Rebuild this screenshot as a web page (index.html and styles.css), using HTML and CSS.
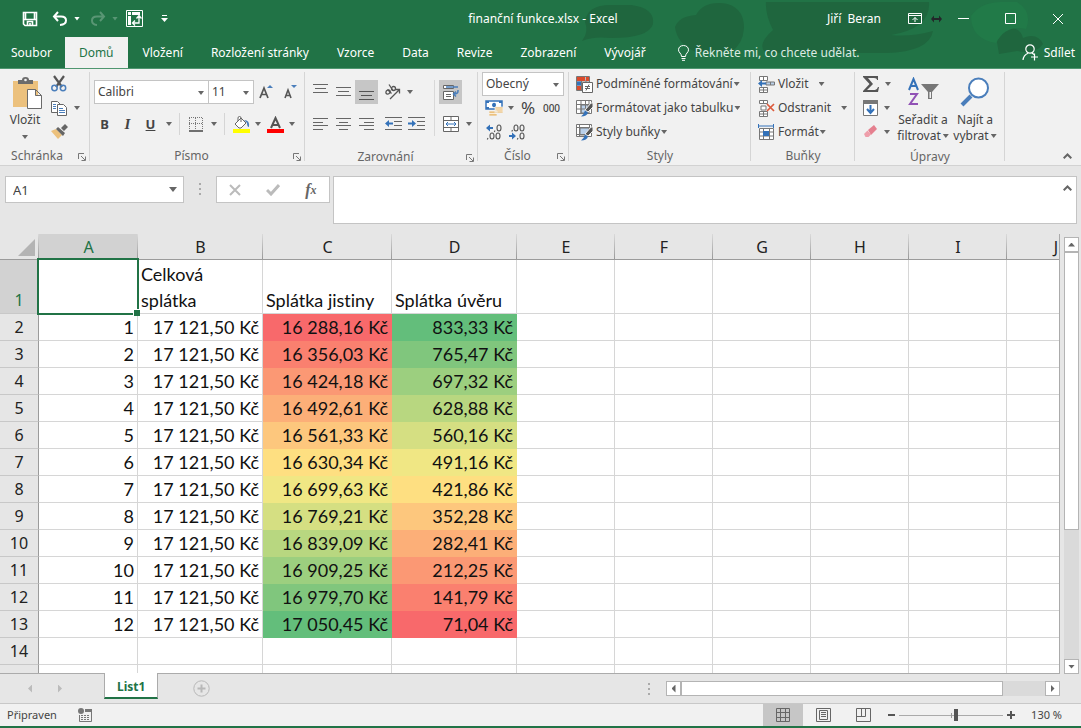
FILE: index.html
```html
<!DOCTYPE html>
<html lang="cs">
<head>
<meta charset="utf-8">
<title>finanční funkce.xlsx - Excel</title>
<link rel="stylesheet" href="styles.css">
</head>
<body>
<div class="app">
<header class="top">
  <svg class="decor" width="530" height="60" viewBox="0 0 530 60" aria-hidden="true">
    <g fill="#1f663e"><path d="M34 22Q36 4 62 5H80Q104 8 102 24Q98 38 60 38Q42 36 31 41Q38 32 34 22Z"/><path d="M124 27Q128 16 145 15Q152 2 170 3Q193 5 193 28Q192 44 180 52H145Q126 44 124 27Z"/><path d="M215 2H378Q380 28 340 35Q360 37 382 31Q378 52 335 53H215Q205 45 222 30Q214 14 215 2Z"/><path d="M446 42Q448 28 462 28Q470 30 472 38Q486 32 492 44Q484 55 466 51L448 54Z"/></g>
    <path fill="#217a48" d="M420 16Q430 2 450 2H466Q482 12 475 29Q455 24 445 43Q420 39 420 16Z"/>
  </svg>
  <div class="titlebar">
    <div class="quick">
      <button aria-label="Uložit"><svg width="16" height="16" viewBox="0 0 16 16" fill="none" stroke="#fff" stroke-width="1.600"><path d="M1.500 1.500h13v13H3l-1.500-1.500zM1.500 8.500h13M3.500 2v6M12.500 2v6"/><path d="M5.500 14v-3.500h5v3.500M8 12v2"/></svg></button>
      <button aria-label="Zpět"><svg width="16" height="16" viewBox="0 0 16 16" fill="none" stroke="#fff" stroke-width="2"><path d="M6 1 2 5.500 6 10M2 5.500h7Q14 5.500 14 9.500T8 14"/></svg></button>
      <span class="caret light"></span>
      <button aria-label="Znovu" class="dim redo"><svg width="16" height="16" viewBox="0 0 16 16" fill="none" stroke="#fff" stroke-width="2"><path d="M10 1l4 4.500-4 4.500M14 5.500H7Q2 5.500 2 9.500T7 14"/></svg></button>
      <span class="caret light dim"></span>
      <button aria-label="Kontingenční tabulka" class="pivot"><svg width="17" height="17" viewBox="0 0 17 17" fill="none" stroke="#fff"><path d="M.5.500h16v16H.5z"/><path fill="#fff" stroke="none" d="M2 2h3v3H2zM6 2h8v3H6zM2 6h3v9H2z"/><path d="M13 5v8H7M10.500 8.500 13 5.500l2.500 3M9 10.500 6.500 13 9 15.500" stroke-width="1.300"/></svg></button>
      <button aria-label="Přizpůsobit panel"><svg width="7" height="8" viewBox="0 0 7 8" fill="#fff"><path d="M1 0h5v1H1zM0 3h7L3.500 7z"/></svg></button>
    </div>
    <h1 class="doc">finanční funkce.xlsx - Excel</h1>
    <div class="win">
      <span class="user">Jiří&nbsp; Beran</span>
      <button aria-label="Zobrazení pásu karet"><svg width="14" height="11" viewBox="0 0 14 11" fill="none" stroke="#fff"><path d="M.5.500h13v10H.5zM.5 2.500h13M7 9V4.500M4.500 7 7 4.500 9.500 7"/></svg></button>
      <svg class="arrows" width="11" height="8" viewBox="0 0 11 8" fill="#23272a"><path d="M0 4l3-3.500V3h5V.5L11 4 8 7.500V5H3v2.500z"/></svg>
      <button class="wb1" aria-label="Minimalizovat"><svg width="11" height="11" viewBox="0 0 11 11" stroke="#fff"><path d="M0 5.500h11"/></svg></button>
      <button class="wb" aria-label="Maximalizovat"><svg width="11" height="11" viewBox="0 0 11 11" fill="none" stroke="#fff"><path d="M.5.500h10v10H.5z"/></svg></button>
      <button class="wb" aria-label="Zavřít"><svg width="12" height="12" viewBox="0 0 12 12" stroke="#fff"><path d="M1 1l10 10M11 1 1 11"/></svg></button>
    </div>
  </div>
  <nav class="tabs">
    <button>Soubor</button><button class="active">Domů</button><button>Vložení</button><button>Rozložení stránky</button><button>Vzorce</button><button>Data</button><button>Revize</button><button>Zobrazení</button><button>Vývojář</button>
    <button class="tell"><svg width="11" height="16" viewBox="0 0 11 16" fill="none" stroke="#fff"><path d="M3.500 11.500Q3.500 9.500 2 8 .5 6.500.5 4.800.8.700 5.500.500q4.700.2 5 4.300Q10.500 6.500 9 8q-1.500 1.500-1.500 3.500zM3.500 13.500h4M4 15.300h3"/></svg>Řekněte mi, co chcete udělat.</button>
    <button class="share"><svg width="17" height="17" viewBox="0 0 17 17" fill="none" stroke="#fff" stroke-width="1.200"><circle cx="8" cy="5" r="4.200"/><path d="M1 16q.5-5 5-6.800M10 9l2 1.500M12.500 9.500v7M9 13h7"/></svg>Sdílet</button>
  </nav>
</header>

<section class="ribbon" aria-label="Domů">
  <div class="group g-clip">
    <div class="body">
      <button class="big"><svg width="32" height="32" viewBox="0 0 32 32"><path fill="#ecc17d" d="M1 4h25v26H1z"/><path fill="#6b6b6b" d="M6 7V3h4Q10 0 13.500 0T17 3h4v4z"/><circle cx="13.500" cy="3" r="1.300" fill="#f1f1f1"/><path fill="#fff" stroke="#6b6b6b" d="M15.500 12.500h8l6 6v13h-14zM23.500 12.500v6h6"/></svg><span>Vložit</span><i class="caret"></i></button>
      <div class="clipcol">
        <button aria-label="Vyjmout"><svg width="16" height="17" viewBox="0 0 16 17" fill="none"><path d="M3 1l8 11M13 1 5 12" stroke="#555" stroke-width="2.200"/><circle cx="3.500" cy="13" r="2.700" stroke="#4a7ebb" stroke-width="1.500"/><circle cx="12" cy="13" r="2.700" stroke="#4a7ebb" stroke-width="1.500"/></svg></button>
        <span class="pair"><button aria-label="Kopírovat"><svg width="16" height="15" viewBox="0 0 16 15" fill="#fff" stroke="#666"><path d="M.5.500h6l3 3v8h-9z"/><path d="M6.500 3.500h6l3 3v8h-9z"/><path stroke="#4a7ebb" d="M2 3.500h3M2 5.500h3M2 7.500h3M8 7.500h4M8 9.500h6M8 11.500h6"/></svg></button><i class="caret"></i></span>
        <button aria-label="Kopírovat formát"><svg width="17" height="15" viewBox="0 0 17 15"><path fill="#ecc17d" d="M0 7l5-2 6 6-4 4z"/><path fill="#666" d="M5 5l2-2 7 6-2 3zM10 4l4-4 3 3-4 4z"/></svg></button>
      </div>
    </div>
    <footer>Schránka<svg class="launch" width="8" height="8" viewBox="0 0 8 8" fill="none" stroke="#777"><path d="M.5 6V.500H6M3 3l4 4M7.500 3.500v4h-4"/></svg></footer>
  </div>

  <div class="group g-font">
    <div class="body stack">
      <div class="line">
        <label class="combo c-name"><select aria-label="Písmo"><option>Calibri</option></select><i class="caret"></i></label><label class="combo c-size"><select aria-label="Velikost písma"><option>11</option></select><i class="caret"></i></label>
        <button class="w24" aria-label="Zvětšit písmo"><svg width="14" height="16" viewBox="0 0 14 16"><path fill="none" stroke="#555" stroke-width="1.700" d="M1 14 5 4l4 10M2.500 10.500h5"/><path fill="#4a7ebb" d="M8 4l3-3 3 3z"/></svg></button><button class="w24" aria-label="Zmenšit písmo"><svg width="14" height="16" viewBox="0 0 14 16"><path fill="none" stroke="#555" stroke-width="1.600" d="M2 14l3-8 3 8M3 11.500h4"/><path fill="#4a7ebb" d="M8 1h6l-3 3z"/></svg></button>
      </div>
      <div class="line second">
        <button class="w23 glyph"><b>B</b></button><button class="w23 glyph"><i class="it">I</i></button><button class="w23 glyph"><u>U</u></button><i class="caret c13"></i><span class="sep"></span>
        <button class="w23" aria-label="Ohraničení"><svg width="14" height="15" viewBox="0 0 14 15" fill="none" stroke="#777"><path stroke-dasharray="1 1" d="M0 .5h14M0 6.500h14M.5 1v12M6.500 1v12M13.500 1v12"/><path stroke="#444" stroke-width="1.500" d="M0 14h14"/></svg></button><i class="caret c13"></i><span class="sep"></span>
        <button class="w24" aria-label="Barva výplně"><svg width="17" height="17" viewBox="0 0 17 17"><path fill="#fff" stroke="#666" d="M2 8l6-6 5 5-5 5H6zM5 5V2q0-1.500 1.500-1.500T8 2v4"/><path fill="#4a7ebb" d="M11 4q6 0 5 7-2 0-2-4z"/><path fill="#ff0" d="M0 13h17v4H0z"/></svg></button><i class="caret c10"></i>
        <button class="w24" aria-label="Barva písma"><svg width="17" height="17" viewBox="0 0 17 17"><path fill="none" stroke="#555" stroke-width="2" d="M4 12 8.500 2 13 12M5.500 9h6"/><path fill="#f00" d="M0 13h17v4H0z"/></svg></button><i class="caret c10"></i>
      </div>
    </div>
    <footer>Písmo<svg class="launch" width="8" height="8" viewBox="0 0 8 8" fill="none" stroke="#777"><path d="M.5 6V.500H6M3 3l4 4M7.500 3.500v4h-4"/></svg></footer>
  </div>

  <div class="group g-align">
    <div class="body">
      <div class="stack inner">
        <div class="line">
          <button class="w23" aria-label="Nahoru"><svg width="15" height="16" stroke="#666"><path d="M0 .5h15M2 4.500h11M0 8.500h15"/></svg></button><button class="w23" aria-label="Uprostřed"><svg width="15" height="16" stroke="#666"><path d="M0 3.500h15M2 7.500h11M0 11.500h15"/></svg></button><button class="w23 on" aria-label="Dolů"><svg width="15" height="16" stroke="#555"><path d="M0 7.500h15M2 11.500h11M0 15.500h15"/></svg></button><button class="w24 gap" aria-label="Orientace"><svg width="18" height="16" viewBox="0 0 18 16" fill="none" stroke="#555" stroke-width="1.300"><ellipse cx="4" cy="8" rx="2.300" ry="1.800" transform="rotate(-40 4 8)"/><path d="M3.500 5.500l4 4M5 .5l4 6M6 15l9-9M11.500 5.500h4v4"/><ellipse cx="9.500" cy="4.500" rx="2" ry="2"/></svg></button><i class="caret c10"></i>
        </div>
        <div class="line">
          <button class="w23" aria-label="Vlevo"><svg width="15" height="12" stroke="#666"><path d="M0 .5h15M0 4.500h10M0 7.500h15M0 11.500h10"/></svg></button><button class="w23" aria-label="Na střed"><svg width="15" height="12" stroke="#666"><path d="M0 .5h15M3 4.500h9M0 7.500h15M3 11.500h9"/></svg></button><button class="w23" aria-label="Vpravo"><svg width="15" height="12" stroke="#666"><path d="M0 .5h15M5 4.500h10M0 7.500h15M5 11.500h10"/></svg></button><button class="w24 gap" aria-label="Zmenšit odsazení"><svg width="17" height="14" viewBox="0 0 17 14" stroke="#666"><path d="M0 .5h17M9 4.500h8M9 8.500h8M0 12.500h17"/><path fill="#3472b9" stroke="none" d="M0 6.500l4-3.500v2.500h4v2H4V10z"/></svg></button><button class="w23" aria-label="Zvětšit odsazení"><svg width="17" height="14" viewBox="0 0 17 14" stroke="#666"><path d="M0 .5h17M9 4.500h8M9 8.500h8M0 12.500h17"/><path fill="#3472b9" stroke="none" d="M8 6.500 4 3v2.500H0v2h4V10z"/></svg></button>
        </div>
      </div>
      <span class="vsep"></span>
      <div class="stack inner">
        <div class="line"><button class="w23 on" aria-label="Zalamovat text"><svg width="18" height="17" viewBox="0 0 18 17" fill="#fff" stroke="#666"><path d="M1.500 1.500h10v3h-10zM1.500 7.500h10v8h-10z"/><path d="M4 10.500h5M4 12.500h5" /><path fill="none" stroke="#4a7ebb" stroke-width="1.500" d="M4 3h12M16 6v1q0 3-4 3M14 7.500 11.500 10l2.500 2.500"/></svg></button></div>
        <div class="line"><button class="w23" aria-label="Sloučit"><svg width="16" height="16" viewBox="0 0 16 16" fill="#fff" stroke="#666"><path d="M.5.500h15v15H.5zM.5 4.500h15M.5 11.500h15M8 0v4M8 12v4"/><path stroke="#3472b9" d="M3 8h10M5 6 3 8l2 2M11 6l2 2-2 2"/></svg></button><i class="caret c13"></i></div>
      </div>
    </div>
    <footer>Zarovnání<svg class="launch" width="8" height="8" viewBox="0 0 8 8" fill="none" stroke="#777"><path d="M.5 6V.500H6M3 3l4 4M7.500 3.500v4h-4"/></svg></footer>
  </div>

  <div class="group g-num">
    <div class="body rows3">
      <label class="combo c-num"><select aria-label="Formát čísla"><option>Obecný</option></select><i class="caret"></i></label>
      <div class="line"><button class="w24" aria-label="Měna"><svg width="18" height="17" viewBox="0 0 18 17"><path fill="#fff" stroke="#3472b9" stroke-width="1.500" d="M1 1h16v8H1z"/><path fill="#3472b9" d="M1 1h3v2H1zM14 1h3v2h-3zM1 7h3v2H1zM8 3q3-1 3 2T8 7q-2-2 0-4z"/><path fill="#ecc17d" stroke="#f1f1f1" stroke-width=".7" d="M10 7h8v6h-8zM4 11h8v5H4z"/><path stroke="#fff" stroke-width=".7" d="M10 9h8M10 11h8M4 13.500h8"/></svg></button><i class="caret c10"></i><button class="w24 pct">%</button><button class="w23 zeros">000</button></div>
      <div class="line"><button class="w24" aria-label="Přidat desetinné místo"><svg width="17" height="16" viewBox="0 0 17 16"><path fill="#3472b9" d="M0 4l4-3.500V3h3v2H4v2.500z"/><g fill="none" stroke="#555" stroke-width="1.100"><ellipse cx="13" cy="4" rx="2" ry="3"/><path d="M9 6.500 8.300 8M2 14l-.7 1.500"/><ellipse cx="6" cy="12" rx="2" ry="3"/><ellipse cx="12" cy="12" rx="2" ry="3"/></g></svg></button><button class="w23" aria-label="Odebrat desetinné místo"><svg width="17" height="16" viewBox="0 0 17 16"><path fill="#3472b9" d="M7 12 3 8.500V11H0v2h3v2.500z"/><g fill="none" stroke="#555" stroke-width="1.100"><ellipse cx="13" cy="12" rx="2" ry="3"/><path d="M9 14l-.7 1.500M3.500 6l-.7 1.500"/><ellipse cx="7" cy="4" rx="2" ry="3"/><ellipse cx="13" cy="4" rx="2" ry="3"/></g></svg></button></div>
    </div>
    <footer>Číslo<svg class="launch" width="8" height="8" viewBox="0 0 8 8" fill="none" stroke="#777"><path d="M.5 6V.500H6M3 3l4 4M7.500 3.500v4h-4"/></svg></footer>
  </div>

  <div class="group g-styles">
    <div class="body rows3">
      <button class="row"><svg width="17" height="17" viewBox="0 0 17 17" fill="#fff" stroke="#777"><path d="M.5.500h13v14H.5zM.5 5h13M.5 10h13M5.500.500v14M10 .5v14"/><path stroke="none" fill="#dc4b2c" d="M1 1h8v4H1zM1 10h4v4H1z"/><path stroke="none" fill="#3472b9" d="M1 5.500h4v4H1z"/><path stroke="none" fill="#dc4b2c" d="M10 1h3v4h-3z"/><path stroke="#666" d="M6.500 6.500h10v10h-10zM9 10.500h5M9 12.500h5M13 8.500 10 14.500"/></svg>Podmíněné formátování<i class="caret"></i></button>
      <button class="row"><svg width="17" height="17" viewBox="0 0 17 17" fill="#fff" stroke="#777"><path d="M.5.500h15v13H.5z"/><path fill="#b9d0ea" d="M5 5h7v8H5z"/><path d="M.5 4.500h15M.5 9h15M5 .5v13M9.500.500v13M13 .5v13"/><path stroke="#f1f1f1" fill="#555" d="M17 3v4l-5 5-3-2 6-7z"/><path stroke="none" fill="#3472b9" d="M9 10.500l3 2q-1 4-7 4 3-2 4-6z"/></svg>Formátovat jako tabulku<i class="caret"></i></button>
      <button class="row"><svg width="17" height="17" viewBox="0 0 17 17" fill="#fff" stroke="#777"><path d="M.5.500h15v12H.5z"/><path fill="#b9d0ea" d="M4 4h9v7H4z"/><path d="M3.500.500v12M.5 3.500h15M.5 10.500h10M13.500 0v4"/><path stroke="#f1f1f1" fill="#555" d="M17 3v4l-5 5-3-2 6-7z"/><path stroke="none" fill="#3472b9" d="M9 10.500l3 2q-1 4-7 4 3-2 4-6z"/></svg>Styly buňky<i class="caret"></i></button>
    </div>
    <footer>Styly</footer>
  </div>

  <div class="group g-cells">
    <div class="body rows3">
      <button class="row"><svg width="17" height="17" viewBox="0 0 17 17" fill="#fff" stroke="#777"><path d="M1.500.500h8v4h-8zM5.500.500v4M1.500 11.500h8v5h-8zM5.500 11.500v5M1.500 14h8"/><path fill="#b9d0ea" d="M8 6h8.500v3H8zM12.500 6v3"/><path fill="#3472b9" stroke="none" d="M0 7.500l4-3.500v2.500h4v2H4V11z"/></svg>Vložit<i class="caret wide"></i></button>
      <button class="row"><svg width="17" height="17" viewBox="0 0 17 17" fill="#fff" stroke="#777"><path d="M1.500.500h8v3h-8zM5.500.500v3M1.500 11.500h8v5h-8zM5.500 11.500v5M1.500 14h8M3 6v4h5V6z"/><path fill="none" stroke="#dc5a3b" stroke-width="1.700" d="M9 4l7 7M16 4l-7 7"/></svg>Odstranit<i class="caret wide"></i></button>
      <button class="row"><svg width="17" height="17" viewBox="0 0 17 17" fill="#fff" stroke="#777"><path d="M1.500 4.500h14v11h-14zM1.500 8h14M1.500 12h14M5.500 4.500v11M11.500 4.500v11"/><path fill="#3472b9" stroke="none" d="M5 7h6v5H5zM0 0h1v4H0zM15 0h1v4h-1zM1 1.500h14v1H1z"/></svg>Formát<i class="caret"></i></button>
    </div>
    <footer>Buňky</footer>
  </div>

  <div class="group g-edit">
    <div class="body">
      <div class="rows3 editcol">
        <span class="pair"><button aria-label="Součet"><svg width="16" height="16" viewBox="0 0 16 16" fill="#555"><path d="M0 0h15v4h-1q0-2-3-2H5l5 6-6 6h8q2 0 3-3h1l-1 5H0v-1l6.500-7L0 1z"/></svg></button><i class="caret"></i></span>
        <span class="pair"><button aria-label="Výplň"><svg width="15" height="16" viewBox="0 0 15 16" fill="#fff" stroke="#777"><path d="M.5.500h14v15H.5z"/><path fill="#777" d="M.5.500h14v3H.5z"/><path fill="none" stroke="#3472b9" stroke-width="2" d="M7.500 5v8M4 9l3.500 4L11 9"/></svg></button><i class="caret"></i></span>
        <span class="pair"><button aria-label="Vymazat"><svg width="15" height="14" viewBox="0 0 15 14"><path fill="#e5808f" d="M5 5l6-5 3 4-6 6z"/><path fill="#ee9eaa" d="M1 9l3.500-3.500 3.500 4L5.500 12H2.500z"/></svg></button><i class="caret"></i></span>
      </div>
      <button class="big sort"><svg width="32" height="30" viewBox="0 0 32 30" fill="none"><path stroke="#3472b9" stroke-width="2" d="M2 13 6.500 2 11 13M3.500 9h6"/><path stroke="#9152b5" stroke-width="2" d="M3 17h7L3 27h8"/><path fill="#777" d="M14 7h18l-7 8v7h-4v-7z"/><path fill="#f1f1f1" d="M22.500 15h1.500v6h-1.500z"/></svg><span>Seřadit a</span><span>filtrovat<i class="caret"></i></span></button>
      <button class="big find"><svg width="30" height="30" viewBox="0 0 30 30" fill="none"><path stroke="#4a7ebb" stroke-width="4" d="M2 28l9-9"/><circle cx="18.500" cy="11" r="9.500" fill="#fff" stroke="#4a7ebb" stroke-width="2"/></svg><span>Najít a</span><span>vybrat<i class="caret"></i></span></button>
    </div>
    <footer>Úpravy</footer>
  </div>
  <button class="collapse" aria-label="Sbalit pás karet"><svg width="9" height="6" viewBox="0 0 9 6" fill="none" stroke="#666" stroke-width="2"><path d="M.7 5.300 4.500 1.500l3.800 3.800"/></svg></button>
</section>

<section class="formula">
  <label class="combo c-cell"><select aria-label="Pole názvů"><option>A1</option></select><i class="caret"></i></label>
  <span class="dots"><i></i><i></i><i></i></span>
  <div class="fx"><button aria-label="Storno"><svg width="12" height="12" stroke="#bbb" stroke-width="2"><path d="M1 1l10 10M11 1 1 11"/></svg></button><button aria-label="Zadat"><svg width="14" height="12" fill="none" stroke="#bbb" stroke-width="3"><path d="M1 6l4 4 8-9"/></svg></button><button class="fn" aria-label="Vložit funkci">f<small>x</small></button></div>
  <div class="entry"><textarea aria-label="Řádek vzorců"></textarea><button aria-label="Sbalit řádek vzorců"><svg width="9" height="6" viewBox="0 0 9 6" fill="none" stroke="#666" stroke-width="2"><path d="M.7 5.300 4.500 1.500l3.800 3.800"/></svg></button></div>
</section>

<main class="work">
  <div class="sheet">
    <table>
      <colgroup><col class="k0"><col class="ka"><col class="kb"><col class="kc"><col class="kb"><col class="ke"><col class="ke"><col class="ke"><col class="ke"><col class="ke"><col class="ke"></colgroup>
      <thead><tr><th class="corner"></th><th class="sel">A</th><th>B</th><th>C</th><th>D</th><th>E</th><th>F</th><th>G</th><th>H</th><th>I</th><th>J</th></tr></thead>
      <tbody>
      <tr class="head"><th class="sel">1</th><td class="cursor"></td><td>Celková<br>splátka</td><td>Splátka jistiny</td><td>Splátka úvěru</td><td></td><td></td><td></td><td></td><td></td><td></td></tr>
      <tr><th>2</th><td>1</td><td>17 121,50 Kč</td><td class="s1">16 288,16 Kč</td><td class="s12">833,33 Kč</td><td></td><td></td><td></td><td></td><td></td><td></td></tr>
      <tr><th>3</th><td>2</td><td>17 121,50 Kč</td><td class="s2">16 356,03 Kč</td><td class="s11">765,47 Kč</td><td></td><td></td><td></td><td></td><td></td><td></td></tr>
      <tr><th>4</th><td>3</td><td>17 121,50 Kč</td><td class="s3">16 424,18 Kč</td><td class="s10">697,32 Kč</td><td></td><td></td><td></td><td></td><td></td><td></td></tr>
      <tr><th>5</th><td>4</td><td>17 121,50 Kč</td><td class="s4">16 492,61 Kč</td><td class="s9">628,88 Kč</td><td></td><td></td><td></td><td></td><td></td><td></td></tr>
      <tr><th>6</th><td>5</td><td>17 121,50 Kč</td><td class="s5">16 561,33 Kč</td><td class="s8">560,16 Kč</td><td></td><td></td><td></td><td></td><td></td><td></td></tr>
      <tr><th>7</th><td>6</td><td>17 121,50 Kč</td><td class="s6">16 630,34 Kč</td><td class="s7">491,16 Kč</td><td></td><td></td><td></td><td></td><td></td><td></td></tr>
      <tr><th>8</th><td>7</td><td>17 121,50 Kč</td><td class="s7">16 699,63 Kč</td><td class="s6">421,86 Kč</td><td></td><td></td><td></td><td></td><td></td><td></td></tr>
      <tr><th>9</th><td>8</td><td>17 121,50 Kč</td><td class="s8">16 769,21 Kč</td><td class="s5">352,28 Kč</td><td></td><td></td><td></td><td></td><td></td><td></td></tr>
      <tr><th>10</th><td>9</td><td>17 121,50 Kč</td><td class="s9">16 839,09 Kč</td><td class="s4">282,41 Kč</td><td></td><td></td><td></td><td></td><td></td><td></td></tr>
      <tr><th>11</th><td>10</td><td>17 121,50 Kč</td><td class="s10">16 909,25 Kč</td><td class="s3">212,25 Kč</td><td></td><td></td><td></td><td></td><td></td><td></td></tr>
      <tr><th>12</th><td>11</td><td>17 121,50 Kč</td><td class="s11">16 979,70 Kč</td><td class="s2">141,79 Kč</td><td></td><td></td><td></td><td></td><td></td><td></td></tr>
      <tr><th>13</th><td>12</td><td>17 121,50 Kč</td><td class="s12">17 050,45 Kč</td><td class="s1">71,04 Kč</td><td></td><td></td><td></td><td></td><td></td><td></td></tr>
      <tr><th>14</th><td></td><td></td><td></td><td></td><td></td><td></td><td></td><td></td><td></td><td></td></tr>
      <tr><th></th><td></td><td></td><td></td><td></td><td></td><td></td><td></td><td></td><td></td><td></td></tr>
      </tbody>
    </table>
  </div>
  <div class="vscroll"><button aria-label="Nahoru"><i class="tri up"></i></button><div class="thumb"></div><span class="rest"></span><button aria-label="Dolů"><i class="tri down"></i></button></div>
</main>

<section class="sheetbar">
  <div class="nav"><button aria-label="Předchozí list"><i class="tri left pale"></i></button><button aria-label="Další list"><i class="tri right pale"></i></button></div>
  <button class="tab">List1</button>
  <button class="add" aria-label="Nový list"><svg width="17" height="17" viewBox="0 0 17 17" fill="none" stroke="#b8b8b8"><circle cx="8.500" cy="8.500" r="7.700"/><path stroke-width="2" d="M8.500 4.500v8M4.500 8.500h8"/></svg></button>
  <span class="dots"><i></i><i></i><i></i></span>
  <div class="hscroll"><button aria-label="Vlevo"><i class="tri left"></i></button><div class="thumb"></div><span class="rest"></span><button aria-label="Vpravo"><i class="tri right"></i></button></div>
</section>

<footer class="status">
  <span>Připraven</span>
  <svg class="macro" width="14" height="14" viewBox="0 0 14 14" fill="#777"><circle cx="3" cy="3" r="3"/><path d="M7 1h7v3H7z"/><path fill="none" stroke="#777" d="M1.500 7v6.500h12V4"/><path fill="none" stroke="#777" d="M3 7.500h9M3 9.500h9M3 11.500h9" stroke-dasharray="2 1"/></svg>
  <div class="views">
    <button class="on" aria-label="Normální"><svg width="14" height="14" fill="none" stroke="#666"><path d="M.5.500h13v13H.5zM.5 4.500h13M.5 9.500h13M4.500.500v13M9.500.500v13"/></svg></button>
    <button aria-label="Rozložení stránky"><svg width="15" height="14" fill="none" stroke="#666"><path d="M.5.500h14v13H.5zM3.500 2.500h8v9h-8zM5 4.500h5M5 6.500h5M5 8.500h5"/></svg></button>
    <button aria-label="Konce stránek"><svg width="15" height="14" fill="none" stroke="#666"><path d="M.5.500h14v13H.5zM5.500.500v8M.5 8.500h9v-8"/></svg></button>
  </div>
  <button class="step" aria-label="Oddálit"><svg width="7" height="8"><path d="M0 3h7v2H0z" fill="#555"/></svg></button>
  <input type="range" min="0" max="100" value="55" aria-label="Lupa">
  <button class="step" aria-label="Přiblížit"><svg width="8" height="8"><path d="M0 3h3V0h2v3h3v2H5v3H3V5H0z" fill="#555"/></svg></button>
  <span class="pc">130 %</span>
</footer>
</div>
</body>
</html>
```
FILE: styles.css
```css
* { box-sizing: border-box; }
body { margin: 0; font: 12px/16px "Noto Sans", "Open Sans", sans-serif; color: #444; }
button { font: inherit; color: inherit; background: none; border: 0; padding: 0; margin: 0; display: flex; align-items: center; justify-content: center; white-space: nowrap; }
svg { display: block; flex: none; }
.app { height: 100vh; min-height: 500px; display: flex; flex-direction: column; background: #e6e6e6; border-bottom: 2px solid #217346; overflow: hidden; }

.caret { flex: none; width: 6px; height: 4px; background: #666; clip-path: polygon(0 0, 100% 0, 50% 100%); }
.caret.light { background: #fff; }
.dim { opacity: .25; }

/* title bar and ribbon tabs */
.top { position: relative; flex: none; background: #217346; color: #fff; border-bottom: 1px solid #4f9670; }
.decor { position: absolute; right: 0; top: 0; width: 530px; }
.titlebar, .tabs { position: relative; display: flex; }
.titlebar { height: 37px; align-items: center; justify-content: space-between; }
.quick { display: flex; align-items: center; flex: 1; padding-left: 22px; }
.quick button:nth-child(2) { margin-left: 14px; margin-right: 6px; }
.quick .redo { margin: 0 6px 0 10px; }
.quick .pivot { margin: 0 18px 0 8px; }
.doc { margin: 0; font-size: 12px; font-weight: 400; }
.win { display: flex; align-items: center; justify-content: flex-end; flex: 1; padding-right: 17px; }
.user { margin-right: 27px; }
.arrows { margin-left: 9px; }
.wb1 { margin-left: 16px; }
.wb { margin-left: 36px; }
.tabs { height: 31px; padding-left: 11px; align-items: stretch; }
.tabs button { padding: 0 14px; }
.tabs button:first-child { padding: 0 13px 0 0; }
.tabs .active { background: #f1f1f1; color: #217346; padding: 0 14px; margin-right: 1px; }
.tabs .tell { gap: 6px; color: #dcebe2; padding-left: 18px; }
.tabs .share { gap: 5px; margin-left: auto; padding: 0 6px 0 0; }

/* ribbon */
.ribbon { flex: none; display: flex; height: 97px; background: #f1f1f1; border-bottom: 1px solid #d2d2d2; }
.group { position: relative; display: flex; flex-direction: column; flex: none; padding-top: 3px; }
.group::after { content: ""; position: absolute; right: 0; top: 3px; bottom: 4px; width: 1px; background: #d5d5d5; }
.group .body { height: 76px; display: flex; }
.group footer { position: relative; text-align: center; color: #666; line-height: 18px; padding-right: 16px; }
.launch { position: absolute; right: 4px; top: 6px; }
.g-clip { width: 90px; }
.g-font { width: 215px; padding-left: 4px; }
.g-align { width: 173px; padding-left: 4px; }
.g-num { width: 91px; padding-left: 4px; }
.g-styles { width: 182px; padding-left: 7px; }
.g-cells { width: 104px; padding-left: 7px; }
.g-edit { width: 150px; padding-left: 7px; }
.group.g-styles footer, .group.g-cells footer, .group.g-edit footer { padding-right: 7px; }
.big { flex-direction: column; justify-content: flex-start; line-height: 16px; }
.g-clip .big { width: 50px; padding-top: 5px; }
.g-clip .big svg { margin: 0 0 3px 5px; }
.big > .caret { margin-top: 7px; }
.clipcol { display: flex; flex-direction: column; align-items: flex-start; justify-content: space-between; padding: 3px 0 8px 1px; }
.pair { display: flex; align-items: center; gap: 7px; }
.group .stack { flex-direction: column; }
.stack { display: flex; gap: 8px; padding-top: 8px; }
.line { display: flex; align-items: center; height: 24px; }
.line button { height: 24px; }
.second { margin-left: -1px; }
.w23 { width: 23px; }
.w24 { width: 24px; }
.line .gap { margin-left: 3px; }
.on { background: #c6c6c6; }
.c13 { margin: 0 3px 0 4px; }
.c10 { margin: 0 2px; }
.sep { width: 1px; height: 22px; background: #d5d5d5; margin: 0 4px; }
.glyph { font-size: 13px; }
.it { font-family: "Liberation Serif", serif; font-weight: 700; font-size: 15px; }
.glyph u { font-weight: 700; }
.combo { position: relative; display: block; height: 24px; background: #fff; border: 1px solid #c4c4c4; }
.combo select { appearance: none; display: block; width: 100%; height: 100%; border: 0; background: none; font: inherit; color: #444; padding: 0 3px; }
.combo .caret { position: absolute; right: 4px; top: 10px; }
.c-name { width: 115px; }
.c-size { width: 45px; border-left: 0; }
.c-num { width: 82px; }
.inner { height: 76px; }
.vsep { width: 1px; background: #d8d8d8; margin: 8px 4px 12px 6px; }
.rows3 { display: flex; flex-direction: column; height: 76px; }
.pct { font-size: 17px; }
.zeros { font-size: 10px; font-weight: 500; }
.row { height: 24px; justify-content: flex-start; gap: 3px; }
.row .caret { margin-left: -2px; }
.row .wide { margin-left: 7px; }
.editcol { width: 34px; }
.editcol .pair { height: 24px; margin-left: 1px; gap: 6px; }
.sort, .find { padding-top: 5px; }
.sort svg, .find svg { margin-bottom: 5px; }
.sort { width: 54px; }
.find { width: 50px; }
.big span { display: flex; align-items: center; gap: 2px; }
.collapse { margin: auto 9px 6px auto; }

/* formula bar */
.formula { flex: none; display: flex; align-items: flex-start; padding: 10px 4px 10px 5px; }
.formula .combo, .fx { height: 27px; }
.c-cell { width: 179px; }
.formula .c-cell select { padding-left: 7px; font-size: 13px; }
.c-cell .caret { width: 8px; height: 5px; right: 6px; }
.dots { display: flex; flex-direction: column; gap: 3px; }
.dots i { width: 2px; height: 2px; background: #aaa; }
.formula .dots { margin: 7px 15px 0; }
.fx { width: 114px; display: flex; align-items: center; justify-content: space-around; background: #fff; border: 1px solid #c4c4c4; }
.fn { font: italic 700 16px/16px "Liberation Serif", serif; color: #666; }
.fn small { font-size: 12px; }
.entry { flex: 1; display: flex; align-items: flex-start; margin-left: 3px; height: 48px; background: #fff; border: 1px solid #c4c4c4; }
.entry textarea { flex: 1; height: 100%; border: 0; resize: none; background: none; outline: 0; }
.entry button { margin: 8px 4px; }

/* worksheet */
.work { flex: 1; min-height: 0; display: flex; }
.sheet { flex: 1; min-width: 0; overflow: hidden; border-right: 1px solid #ababab; border-bottom: 1px solid #ababab; background: linear-gradient(#e6e6e6 26px, #fff 26px); }
table { table-layout: fixed; width: 1105px; border-collapse: separate; border-spacing: 0; font: 18px/26px Lato, sans-serif; font-variant-ligatures: none; color: #111; }
.k0 { width: 39px; }
.ka { width: 99px; }
.kb { width: 125px; }
.kc { width: 129px; }
.ke { width: 98px; }
th { font: 16px/24px "Noto Sans", sans-serif; padding: 0; background: #e6e6e6; color: #222; }
thead th { height: 26px; border-bottom: 1px solid #9b9b9b; background: linear-gradient(#dadada, #999) right / 1px 100% no-repeat #e6e6e6; }
tbody th { line-height: 26px; border-right: 1px solid #9b9b9b; border-bottom: 1px solid #c8c8c8; vertical-align: bottom; }
thead .sel, tbody .sel { background-color: #d2d2d2; color: #217346; }
.corner { position: relative; }
.corner::after { content: ""; position: absolute; right: 4px; bottom: 3px; width: 17px; height: 17px; background: #b4b4b4; clip-path: polygon(100% 0, 100% 100%, 0 100%); }
td { height: 27px; padding: 0 3px; text-align: right; vertical-align: bottom; white-space: nowrap; background: #fff; border-right: 1px solid #d6d6d6; border-bottom: 1px solid #d6d6d6; }
.head td { height: 54px; line-height: 26px; text-align: left; }
.cursor { position: relative; }
.cursor::before { content: ""; position: absolute; inset: -2px; border: 2px solid #217346; }
.cursor::after { content: ""; position: absolute; right: -3px; bottom: -3px; width: 6px; height: 6px; background: #217346; border: 1px solid #fff; border-right: 0; border-bottom: 0; }
td[class^="s"] { border-color: transparent; }
.s1 { background: #f8696b; }
.s2 { background: #fa806f; }
.s3 { background: #fb9874; }
.s4 { background: #fcaf78; }
.s5 { background: #fdc77d; }
.s6 { background: #fedf81; }
.s7 { background: #f0e784; }
.s8 { background: #d5df82; }
.s9 { background: #b8d780; }
.s10 { background: #9ccf7f; }
.s11 { background: #80c67d; }
.s12 { background: #63be7b; }

/* scroll bars */
.vscroll, .hscroll { display: flex; flex: none; }
.vscroll { flex-direction: column; width: 15px; margin: 3px 2px 0 4px; background: #dadada; }
.vscroll button, .hscroll button { width: 15px; height: 15px; flex: none; background: #fff; border: 1px solid #b4b4b4; }
.thumb { background: #fff; border: 1px solid #b4b4b4; }
.vscroll .thumb { flex: 277; }
.vscroll .rest { flex: 130; }
.hscroll .thumb { flex: 321; }
.hscroll .rest { flex: 42; }
.tri { background: #666; }
.up { width: 7px; height: 4px; clip-path: polygon(50% 0, 100% 100%, 0 100%); }
.down { width: 7px; height: 4px; clip-path: polygon(0 0, 100% 0, 50% 100%); }
.left { width: 4px; height: 8px; clip-path: polygon(100% 0, 100% 100%, 0 50%); }
.right { width: 4px; height: 8px; clip-path: polygon(0 0, 100% 50%, 0 100%); }
.pale { background: #bbb; }

.sheetbar { flex: none; display: flex; align-items: center; height: 29px; padding-right: 21px; }
.nav { display: flex; gap: 26px; width: 104px; padding-left: 28px; }
.tab { align-self: flex-start; height: 26px; margin-top: -1px; padding: 3px 12px 0; background: #fff; border: 1px solid #ababab; border-top: 0; border-bottom: 2px solid #217346; color: #217346; font-weight: 700; }
.add { margin-left: 35px; }
.sheetbar .dots { margin: 0 16px 0 auto; }
.hscroll { width: 394px; background: #dadada; }

.status { flex: none; display: flex; align-items: center; height: 23px; padding: 0 19px 0 7px; background: #f1f1f1; border-top: 1px solid #c8c8c8; font-size: 11px; }
.macro { margin-left: 21px; }
.views { display: flex; align-self: stretch; margin-left: auto; margin-right: 5px; }
.views button { width: 40px; }
.step { flex: none; }
input[type="range"] { appearance: none; width: 104px; height: 12px; margin: 0 4px; background: linear-gradient(#999, #999) 52px 50% / 1px 5px no-repeat, linear-gradient(#aaa, #aaa) 0 50% / 100% 1px no-repeat; }
input[type="range"]::-webkit-slider-thumb { appearance: none; width: 4px; height: 12px; background: #555; }
.pc { margin-left: 16px; }
```
